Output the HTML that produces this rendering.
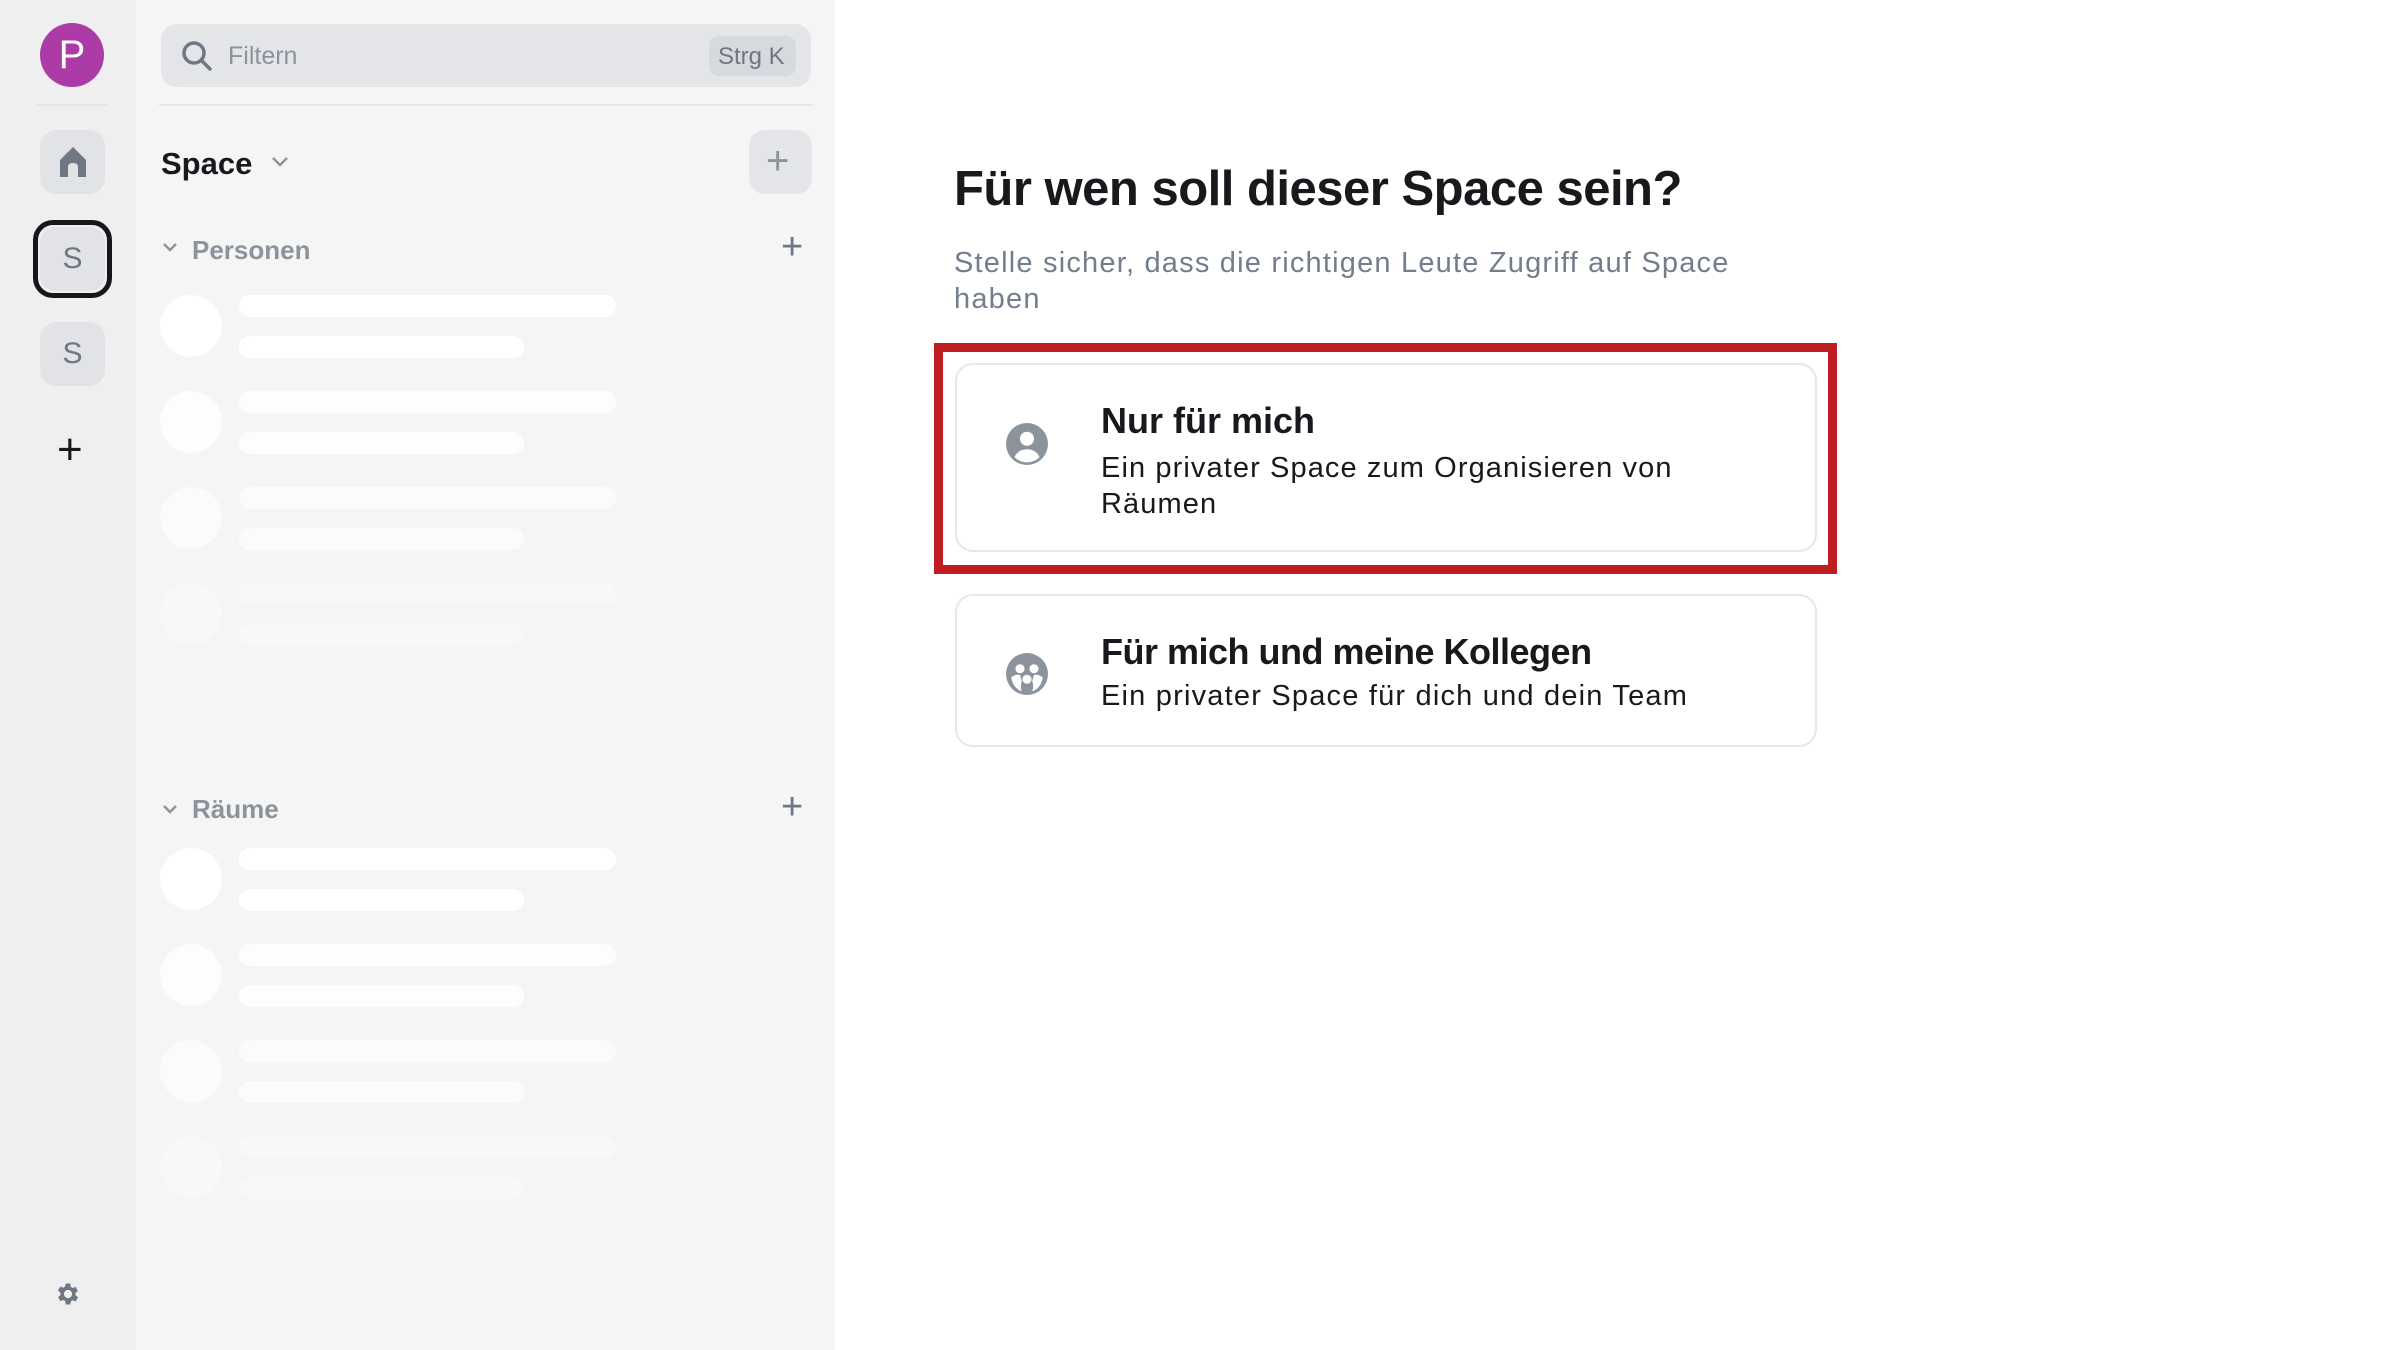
<!DOCTYPE html>
<html><head><meta charset="utf-8"><style>
*{margin:0;padding:0;box-sizing:border-box}
body{width:2400px;height:1350px;overflow:hidden;font-family:"Liberation Sans",sans-serif;background:#fff;position:relative}
.abs{position:absolute}
.rail{left:0;top:0;width:136px;height:1350px;background:#efeff0}
.side{left:136px;top:0;width:699px;height:1350px;background:#f5f5f6}
.btn{position:absolute;left:40px;width:65px;height:64px;border-radius:16px;background:#e1e3e7;display:flex;align-items:center;justify-content:center;color:#6f7785;font-size:30px}
.sk{position:absolute;background:#fff;border-radius:12px}
.t{position:absolute;white-space:nowrap}
.card{position:absolute;left:955px;width:862px;border:2px solid #e6e7ea;border-radius:18px;background:#fff}
</style></head><body>
<div class="abs rail"></div>
<div class="abs side"></div>
<div class="abs" style="left:40px;top:23px;width:64px;height:64px;border-radius:50%;background:#ac3ba8;color:#fff;font-size:40px;display:flex;align-items:center;justify-content:center">P</div>
<div class="abs" style="left:36px;top:104px;width:72px;height:2px;background:#e4e5e8"></div>
<div class="btn" style="top:130px"><svg width="30" height="32" viewBox="0 0 30 32"><path d="M15 1 L28 14 V31 H20 V21 Q20 17 15 17 Q10 17 10 21 V31 H2 V14 Z" fill="#6f7785"/></svg></div>
<div class="abs" style="left:33px;top:220px;width:79px;height:78px;border:5px solid #15171a;border-radius:20px"></div>
<div class="btn" style="top:227px">S</div>
<div class="btn" style="top:322px">S</div>
<div class="t" style="left:57px;top:428px;font-size:44px;color:#17191c;line-height:44px">+</div>
<svg class="abs" style="left:54px;top:1280px" width="28" height="28" viewBox="0 0 24 24"><path fill="#6f7785" d="M19.4 13a7.5 7.5 0 0 0 0-2l2.1-1.6-2-3.5-2.5 1a7 7 0 0 0-1.7-1L15 3h-4l-.4 2.6a7 7 0 0 0-1.7 1l-2.5-1-2 3.5L6.6 11a7.5 7.5 0 0 0 0 2l-2.1 1.6 2 3.5 2.5-1a7 7 0 0 0 1.7 1L11 21h4l.4-2.6a7 7 0 0 0 1.7-1l2.5 1 2-3.5zM13 15.5a3.5 3.5 0 1 1 0-7 3.5 3.5 0 0 1 0 7z" transform="translate(-1 0)"/></svg>

<div class="abs" style="left:161px;top:24px;width:650px;height:63px;border-radius:16px;background:#e3e5e8"></div>
<svg class="abs" style="left:181px;top:40px" width="32" height="32" viewBox="0 0 32 32"><circle cx="13" cy="13" r="10" fill="none" stroke="#6f7785" stroke-width="3.5"/><path d="M20 20 L29 29" stroke="#6f7785" stroke-width="3.5" stroke-linecap="round"/></svg>
<div class="t" style="left:228px;top:42px;font-size:25px;color:#8d939d">Filtern</div>
<div class="abs" style="left:709px;top:36px;width:87px;height:40px;border-radius:10px;background:#d6d9de"></div>
<div class="t" style="left:718px;top:43px;font-size:24px;color:#6f7785">Strg K</div>
<div class="abs" style="left:159px;top:104px;width:654px;height:2px;background:#e6e7ea"></div>

<div class="t" style="left:161px;top:146px;font-size:31px;font-weight:bold;color:#17191c">Space</div>
<svg class="abs" style="left:271px;top:156px" width="18" height="12" viewBox="0 0 18 12"><path d="M2 2 L9 9 L16 2" fill="none" stroke="#8d939d" stroke-width="2.5"/></svg>
<div class="abs" style="left:749px;top:130px;width:63px;height:64px;border-radius:16px;background:#e3e5e8"></div>
<div class="t" style="left:766px;top:138px;font-size:40px;color:#8d939d;line-height:46px">+</div>

<svg class="abs" style="left:162px;top:242px" width="16" height="12" viewBox="0 0 16 12"><path d="M2 2 L8 8 L14 2" fill="none" stroke="#8d939d" stroke-width="2.5"/></svg>
<div class="t" style="left:192px;top:235px;font-size:26px;font-weight:bold;color:#8d939d">Personen</div>
<div class="t" style="left:781px;top:226px;font-size:38px;color:#6f7785">+</div>

<svg class="abs" style="left:162px;top:804px" width="16" height="12" viewBox="0 0 16 12"><path d="M2 2 L8 8 L14 2" fill="none" stroke="#8d939d" stroke-width="2.5"/></svg>
<div class="t" style="left:192px;top:794px;font-size:26px;font-weight:bold;color:#8d939d">Räume</div>
<div class="t" style="left:781px;top:786px;font-size:38px;color:#6f7785">+</div>

<div id="sk1"></div>
<script>
function rows(y0){var h='';var op=[1,.8,.55,.3];for(var i=0;i<4;i++){var y=y0+i*96;h+='<div class="sk" style="left:160px;top:'+(y-31)+'px;width:62px;height:62px;border-radius:50%;opacity:'+op[i]+'"></div><div class="sk" style="left:239px;top:'+(y-31)+'px;width:377px;height:22px;opacity:'+op[i]+'"></div><div class="sk" style="left:239px;top:'+(y+10)+'px;width:285px;height:22px;opacity:'+op[i]+'"></div>';}return h;}
document.getElementById('sk1').innerHTML=rows(326)+rows(879);
</script>

<div class="t" style="left:954px;top:161px;font-size:49px;font-weight:bold;color:#17191c;letter-spacing:-0.5px">Für wen soll dieser Space sein?</div>
<div class="t" style="left:954px;top:245px;font-size:29px;color:#737d8c;line-height:36px;letter-spacing:1.2px">Stelle sicher, dass die richtigen Leute Zugriff auf Space<br>haben</div>

<div class="abs" style="left:934px;top:343px;width:903px;height:231px;border:9px solid #be1d22"></div>
<div class="card" style="top:363px;height:189px"></div>
<svg class="abs" style="left:1006px;top:423px" width="42" height="42" viewBox="0 0 24 24"><circle cx="12" cy="12" r="12" fill="#8d939d"/><circle cx="12" cy="9" r="4" fill="#fff"/><path d="M4.8 19.5 Q7 15 12 15 Q17 15 19.2 19.5 Q16 22.5 12 22.5 Q8 22.5 4.8 19.5Z" fill="#fff"/></svg>
<div class="t" style="left:1101px;top:400px;font-size:36px;font-weight:bold;color:#17191c">Nur für mich</div>
<div class="t" style="left:1101px;top:450px;font-size:29px;color:#17191c;line-height:36px;letter-spacing:1.1px">Ein privater Space zum Organisieren von<br>Räumen</div>

<div class="card" style="top:594px;height:153px"></div>
<svg class="abs" style="left:1006px;top:653px" width="42" height="42" viewBox="0 0 24 24"><circle cx="12" cy="12" r="12" fill="#8d939d"/><circle cx="8" cy="9" r="2.6" fill="#fff"/><circle cx="16" cy="9" r="2.6" fill="#fff"/><circle cx="12" cy="15" r="2.6" fill="#fff"/><path d="M3 14 Q5 12 8 12.5 L9 16 Q8 19 9 22 Q4 20 3 14Z" fill="#fff"/><path d="M21 14 Q19 12 16 12.5 L15 16 Q16 19 15 22 Q20 20 21 14Z" fill="#fff"/></svg>
<div class="t" style="left:1101px;top:631px;font-size:36px;font-weight:bold;color:#17191c;letter-spacing:-0.5px">Für mich und meine Kollegen</div>
<div class="t" style="left:1101px;top:680px;font-size:29px;color:#17191c;letter-spacing:1.2px">Ein privater Space für dich und dein Team</div>
</body></html>
